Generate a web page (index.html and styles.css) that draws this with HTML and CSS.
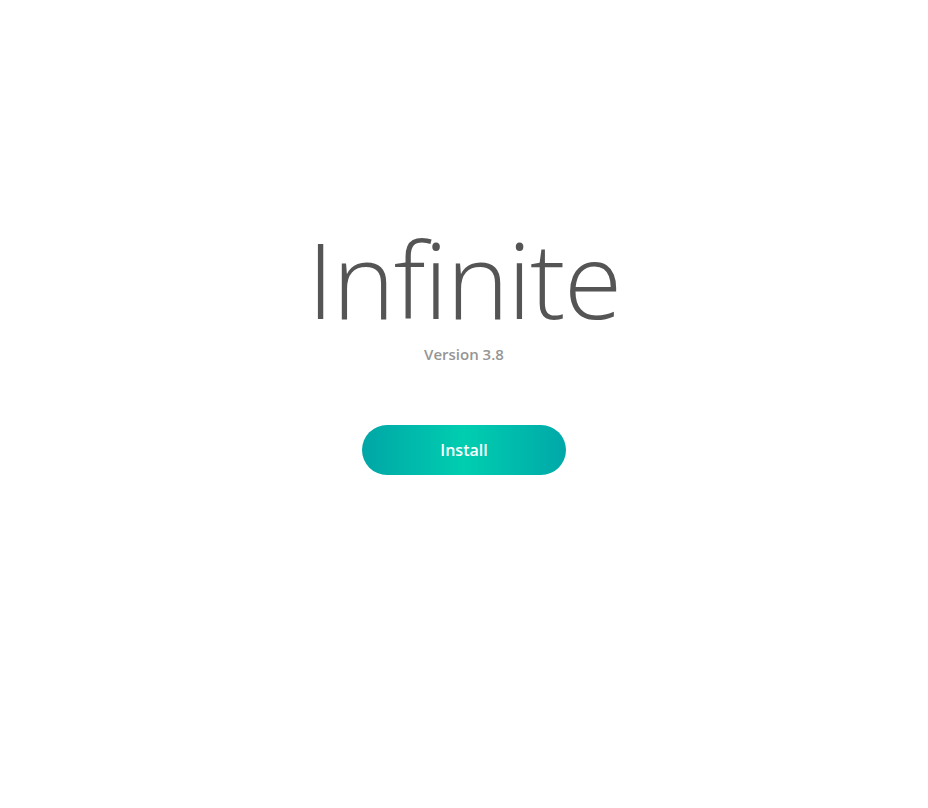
FILE: index.html
```html
<!DOCTYPE html>
<html lang="en">
<head>
    <meta charset="UTF-8">
    <meta name="viewport" content="width=device-width, initial-scale=1.0">
    <title>Infinite</title>
    <link rel="stylesheet" href="styles.css">
</head>
<body>
    <div class="intro">
        <h1>Infinite</h1>
        <p class="version">Version 3.8</p>
        <button class="install">Install</button>
    </div>
</body>
</html>
```

FILE: styles.css
```css
body {
    font-family: "Open Sans", sans-serif;
    margin: 0;
    height: 808px;
    background-color: #fff;
    display: flex;
    justify-content: center;
}
.intro {
    display: flex;
    flex-direction: column;
    align-items: center;
    padding-top: 225px;
}
.intro h1 {
    margin: 0;
    font-size: 106px;
    font-weight: 300;
    letter-spacing: -1.5px;
    line-height: 106px;
    color: #555;
}
.version {
    margin: 13px 0 0;
    font-size: 15px;
    font-weight: 600;
    color: #959595;
    line-height: 20px;
}
.install {
    margin-top: 61px;
    width: 204px;
    height: 50px;
    border: none;
    border-radius: 25px;
    background: linear-gradient(to right, #00a6a6, #00ceb0 50%, #00a8a8);
    color: #fff;
    font-family: "Open Sans", sans-serif;
    font-size: 16px;
    font-weight: 600;
    cursor: pointer;
}
```
